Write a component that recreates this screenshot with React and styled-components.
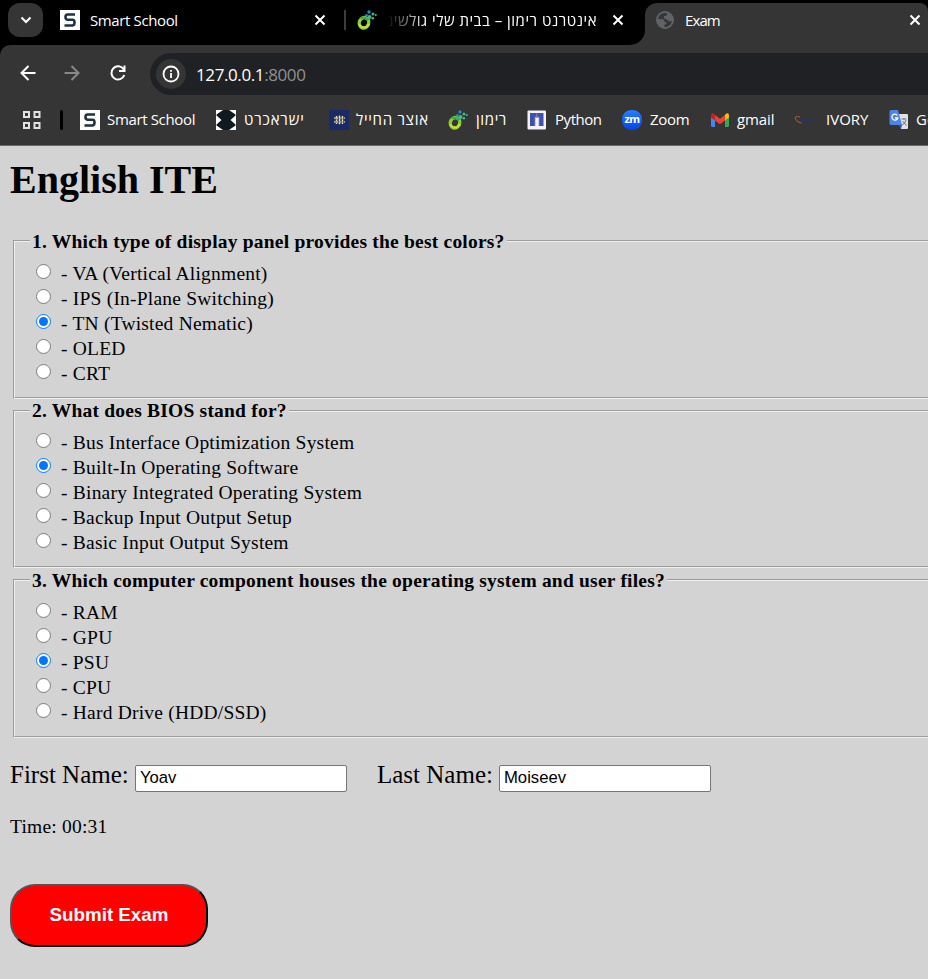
import React from 'react';
import styled, { createGlobalStyle } from 'styled-components';

const GlobalStyle = createGlobalStyle`
  * { box-sizing: border-box; }
  body { margin: 0; background: #d3d3d3; overflow: hidden; }
`;

const Window = styled.div`
  width: 928px;
  height: 979px;
  overflow: hidden;
  display: flex;
  flex-direction: column;
  background: #d3d3d3;
  color: #000;
`;

const Chrome = styled.header`
  flex: none;
  background: #000;
  color: #fff;
  font-family: 'Open Sans', 'Noto Sans', 'DejaVu Sans', sans-serif;
  font-size: 15px;
`;

const TabStrip = styled.div`
  display: flex;
  height: 45px;
`;

const InactiveCorner = styled.div`
  width: 645px;
  height: 45px;
  flex: none;
  background: #353535;
`;

const InactiveTabs = styled.div`
  height: 45px;
  display: flex;
  align-items: center;
  padding: 0 0 5px 8px;
  background: #000;
  border-radius: 0 0 15px 0;
`;

const TabSearch = styled.div`
  width: 35px;
  height: 34px;
  flex: none;
  display: flex;
  align-items: center;
  justify-content: center;
  background: #353535;
  border-radius: 12px;
`;

const Tab = styled.div`
  display: flex;
  align-items: center;
  width: ${(p) => p.$width}px;
  padding-left: ${(p) => p.$inset}px;
  flex: none;
`;

const TabTitle = styled.span`
  width: ${(p) => p.$width}px;
  margin-left: ${(p) => p.$gap}px;
  margin-right: ${(p) => p.$after || 0}px;
  line-height: 22px;
  white-space: nowrap;
  letter-spacing: ${(p) => p.$track || 0}px;
  overflow: hidden;
  direction: ${(p) => (p.$rtl ? 'rtl' : 'ltr')};
  ${(p) => p.$rtl && 'mask-image: linear-gradient(to right, transparent, #000 38px);'}
`;

const TabDivider = styled.i`
  width: 2px;
  height: 20px;
  flex: none;
  background: #3c3c3c;
`;

const ActiveTab = styled.div`
  flex: 1;
  display: flex;
  align-items: center;
  margin-top: 3px;
  padding: 0 0 8px 11px;
  background: #353535;
  border-radius: 12px 8px 0 0;
`;

const Toolbar = styled.div`
  height: 50px;
  display: flex;
  align-items: center;
  padding: 8px 0 0 18px;
  background: #353535;
  border-top-left-radius: 10px;
`;

const NavButton = styled.span`
  width: 20px;
  height: 20px;
  flex: none;
  display: flex;
  align-items: center;
  justify-content: center;
  margin: 0 ${(p) => p.$after}px 2px 0;
`;

const AddressBar = styled.div`
  flex: 1;
  height: 42px;
  display: flex;
  align-items: center;
  padding-left: 6px;
  background: #202124;
  border-radius: 21px 0 0 21px;
  font-size: 17px;
  letter-spacing: -0.4px;
`;

const SiteInfo = styled.span`
  width: 30px;
  height: 30px;
  display: flex;
  align-items: center;
  justify-content: center;
  margin-right: 10px;
  border-radius: 50%;
  background: #353535;
`;

const Port = styled.span`
  color: #8f9193;
`;

const Bookmarks = styled.nav`
  height: 51px;
  display: flex;
  align-items: center;
  padding: 0 0 1px 22px;
  background: #353535;
  border-bottom: 1px solid #6b6768;
`;

const BookmarkDivider = styled.i`
  width: 3px;
  height: 20px;
  flex: none;
  margin: 0 17px 0 19px;
  border-radius: 2px;
  background: #000;
`;

const Bookmark = styled.span`
  width: ${(p) => p.$width}px;
  flex: none;
  display: flex;
  align-items: center;
  white-space: nowrap;
  line-height: 22px;
`;

const BookmarkLabel = styled.span`
  margin-left: ${(p) => p.$gap}px;
  padding-bottom: 2px;
  line-height: 20px;
  letter-spacing: ${(p) => p.$track}px;
`;

const Page = styled.main`
  flex: 1;
  font-family: 'Liberation Serif', 'Times New Roman', serif;
  font-size: 20px;
`;

const Title = styled.h1`
  margin: 10px 0 0 10px;
  height: 73px;
  font-size: 40px;
  line-height: 48px;
`;

const Question = styled.fieldset`
  width: 1000px;
  height: ${(p) => p.$height}px;
  margin: 0 0 0 13px;
  padding: 0 0 0 15px;
  border: 2px groove #f0f0f0;
`;

const Prompt = styled.legend`
  padding: 0 2px;
  height: 23px;
  font-size: 19.5px;
  letter-spacing: 0.21px;
  font-weight: bold;
  line-height: ${(p) => p.$line}px;
  white-space: nowrap;
`;

const Options = styled.div`
  padding-top: ${(p) => p.$top}px;
`;

const Option = styled.label`
  display: flex;
  height: 25px;
  line-height: 27px;
  padding-left: 6px;
  font-size: 19.5px;
  letter-spacing: 0.21px;
`;

const Radio = styled.input`
  width: 15px;
  height: 15px;
  flex: none;
  margin: 4px 10px 0 0;
`;

const Names = styled.div`
  display: flex;
  align-items: flex-start;
  height: 77px;
  padding: 26px 0 0 10px;
`;

const NameLabel = styled.label`
  width: ${(p) => p.$width}px;
  font-size: 25px;
  line-height: 22px;
  white-space: nowrap;
`;

const NameInput = styled.input`
  width: 212px;
  height: 27px;
  margin: 1px 30px 0 0;
  padding: 0 4px 2px;
  border: 1px solid #767676;
  border-radius: 2px;
  background: #fff;
  color: #000;
  font: 16.67px 'Liberation Sans', Arial, sans-serif;
`;

const Timer = styled.p`
  margin: 0 0 0 10px;
  height: 69px;
  font-size: 19.5px;
  letter-spacing: 0.21px;
  line-height: 24px;
`;

const Submit = styled.button`
  display: block;
  width: 198px;
  height: 63px;
  margin-left: 10px;
  padding: 0 0 2px;
  border: 2px outset #000;
  border-radius: 25px;
  background: #f00;
  color: #fff;
  font: bold 18.75px 'Liberation Sans', Arial, sans-serif;
`;

const Glyph = styled.svg`
  display: block;
  flex: none;
  fill: none;
  overflow: visible;
`;

const CloseIcon = () => (
  <Glyph width="12" height="12" viewBox="0 0 12 12" stroke="#fff" strokeWidth="2">
    <path d="M1.5 1.5l9 9M10.5 1.5l-9 9" />
  </Glyph>
);

const SchoolIcon = () => (
  <Glyph width="20" height="20" viewBox="0 0 20 20">
    <path fill="#fff" d="M0 0h20v20H0z" />
    <path d="M15 4.5H7.5Q5.5 4.5 5.5 7T7.5 9.7h5Q14.5 9.7 14.5 12.4T12.5 15.5H4.5" stroke="#20323f" strokeWidth="2.6" />
  </Glyph>
);

const RimonIcon = () => (
  <Glyph width="20" height="20" viewBox="0 0 20 20">
    <ellipse cx="7" cy="12.800" rx="4.700" ry="5.300" transform="rotate(20 7 12.8)" stroke="#8ccf2f" strokeWidth="3.4" />
    <path d="M2.3 14A5 5 0 0 0 11.800 14" stroke="#c0dc35" strokeWidth="2.200" />
    <path d="M3.500 8.500q4-2.500 8 1.500" stroke="#35a95b" strokeWidth="2.2" />
    <g fill="#39bd8c">
      <circle cx="12.500" cy="7" r="2" /><circle cx="16" cy="4" r="1.500" />
      <circle cx="15.800" cy="8.300" r="1.300" /><circle cx="18.8" cy="5" r="1" />
    </g>
    <g fill="#258ec0"><circle cx="12" cy="2" r="1.7" /><circle cx="9.500" cy="5.2" r="1.300" /></g>
  </Glyph>
);

const GlobeIcon = () => (
  <Glyph width="18" height="18" viewBox="0 0 18 18">
    <circle cx="9" cy="9" r="9" fill="#5f6368" />
    <path fill="#353535" d="M9 2Q3 2 2 8l5 .2Q8.8 9 8.5 11l2 .2V13l-2 .8L8.3 16Q14.5 16 16 10q-2 1-4-.2-1-2-3-1.800Q7 7 8 5l3-.5V2.300z" />
  </Glyph>
);

const GridIcon = () => (
  <Glyph width="19" height="18" viewBox="0 0 19 18" stroke="#e3e3e3" strokeWidth="2">
    <path d="M2 1h5v5H2zM12.500 1h5v5h-5zM2 12h5v5H2zM12.500 12h5v5h-5z" />
  </Glyph>
);

const IsracardIcon = () => (
  <Glyph width="20" height="20" viewBox="0 0 20 20">
    <path fill="#fff" d="M0 0h20v20H0z" />
    <path fill="#101820" d="M7 0h6l6.500 4.500v1L14.500 10l5 4.500v1L13 20H7L.5 15.500v-1l5-4.500-5-4.500v-1z" />
  </Glyph>
);

const OtzarIcon = () => (
  <Glyph width="20" height="20" viewBox="0 0 20 20">
    <path fill="#1b2a66" d="M0 0h20v20H0z" />
    <path stroke="#eadf9a" strokeWidth="1.500" d="M7.500 6v8M10.500 5.500v9M13.500 6v8" strokeDasharray="2.400 .8" />
    <path stroke="#eadf9a" strokeWidth="1.200" d="M5 8.200h11M5 11.800h11" strokeDasharray="1.700 .8" />
  </Glyph>
);

const PythonIcon = () => (
  <Glyph width="20" height="20" viewBox="0 0 20 20">
    <rect x=".5" y=".5" width="18.500" height="19" rx="1" fill="#f3f3f8" />
    <path fill="#3f51a8" d="M3 3h13.500v13H12V7.500H8V16H3z" />
    <path stroke="#8a94cd" strokeWidth=".8" d="M8 16V7h4v9M9.800 3v4" />
  </Glyph>
);

const ZoomText = styled.span`
  width: 20px;
  height: 20px;
  flex: none;
  border-radius: 9px;
  background: linear-gradient(#2a7cff, #0644e8);
  font: bold 11px/18px 'Open Sans', sans-serif;
  letter-spacing: -0.5px;
  text-align: center;
`;

const GmailIcon = () => (
  <Glyph width="20" height="20" viewBox="0 0 20 20">
    <path fill="#4285f4" d="M1 7l4 3v7H2.500Q1 17 1 15.500z" />
    <path fill="#34a853" d="M19 7l-4 3v7h2.500q1.500 0 1.500-1.500z" />
    <path fill="#ea4335" d="M5 5l5 3.800L15 5v5.500l-5 3.700-5-3.700z" />
    <path fill="#c5221f" d="M1 5.500q0-2.700 2.500-2L5 4.700v5.800L1 7.500z" />
    <path fill="#fbbc04" d="M19 5.500q0-2.700-2.500-2L15 4.700v5.800l4-3z" />
  </Glyph>
);

const IvoryIcon = () => (
  <Glyph width="20" height="20" viewBox="0 0 20 20">
    <path d="M6 7Q0 5.500 1.500 9q1.500 3.500 6 4" stroke="#a7672d" strokeWidth="1" />
    <path d="M3 8q5 4.500 16 1M8 11.500l8-1" stroke="#29336f" strokeWidth="1.500" />
  </Glyph>
);

const TranslateIcon = () => (
  <Glyph width="20" height="20" viewBox="0 0 20 20">
    <path fill="#dfe1e5" d="M8 4h10q1 0 1 1v13q0 1-1 1h-6z" />
    <path fill="#4c85e8" d="M1 0h8l4 15H2q-1.500 0-1.500-1.500V1.500Q.5 0 2 0z" />
    <path d="M8.300 5.300A3 3 0 1 0 8.800 8H6" stroke="#fff" strokeWidth="1.300" />
    <path d="M12.500 9h5M15 8v1.500M17 10q-1 4-4 5M13.500 11l4 4.500" stroke="#6d7781" />
    <path fill="#3156aa" d="M9.500 15H13l-1 4z" />
  </Glyph>
);

const bookmarks = [
  { icon: <SchoolIcon />, text: 'Smart School', width: 136, gap: 7, track: -0.35 },
  { icon: <IsracardIcon />, text: 'ישראכרט', width: 113, gap: 8, track: 0.85 },
  { icon: <OtzarIcon />, text: 'אוצר החייל', width: 119, gap: 7, track: 0.7 },
  { icon: <RimonIcon />, text: 'רימון', width: 79, gap: 8, track: 0.6 },
  { icon: <PythonIcon />, text: 'Python', width: 95, gap: 8, track: -0.45 },
  { icon: <ZoomText>zm</ZoomText>, text: 'Zoom', width: 88, gap: 8, track: -0.3 },
  { icon: <GmailIcon />, text: 'gmail', width: 84, gap: 7, track: -0.1 },
  { icon: <IvoryIcon />, text: 'IVORY', width: 95, gap: 12, track: 0 },
  { icon: <TranslateIcon />, text: 'Google', width: 80, gap: 7, track: 0 },
];

const questions = [
  {
    prompt: '1. Which type of display panel provides the best colors?',
    height: 170,
    line: 25,
    top: 8,
    selected: 2,
    options: ['VA (Vertical Alignment)', 'IPS (In-Plane Switching)', 'TN (Twisted Nematic)', 'OLED', 'CRT'],
  },
  {
    prompt: '2. What does BIOS stand for?',
    height: 169,
    line: 23,
    top: 7,
    selected: 1,
    options: ['Bus Interface Optimization System', 'Built-In Operating Software', 'Binary Integrated Operating System', 'Backup Input Output Setup', 'Basic Input Output System'],
  },
  {
    prompt: '3. Which computer component houses the operating system and user files?',
    height: 170,
    line: 25,
    top: 8,
    selected: 2,
    options: ['RAM', 'GPU', 'PSU', 'CPU', 'Hard Drive (HDD/SSD)'],
  },
];

export default function App() {
  return (
    <Window>
      <GlobalStyle />
      <Chrome>
        <TabStrip>
          <InactiveCorner>
            <InactiveTabs>
              <TabSearch>
                <Glyph width="12" height="8" viewBox="0 0 12 8" stroke="#fff" strokeWidth="2">
                  <path d="M1.500 1.500L6 6l4.500-4.500" />
                </Glyph>
              </TabSearch>
              <Tab $width={301} $inset={17}>
                <SchoolIcon />
                <TabTitle $width={224} $gap={10} $track={-0.38}>Smart School</TabTitle>
                <CloseIcon />
              </Tab>
              <TabDivider />
              <Tab $width={290} $inset={11}>
                <RimonIcon />
                <TabTitle $rtl $width={210} $gap={10} $after={15} $track={0.5}>אינטרנט רימון – בבית שלי גולשים</TabTitle>
                <CloseIcon />
              </Tab>
            </InactiveTabs>
          </InactiveCorner>
          <ActiveTab>
            <GlobeIcon />
            <TabTitle $width={224} $gap={11} $track={-0.9}>Exam</TabTitle>
            <CloseIcon />
          </ActiveTab>
        </TabStrip>
        <Toolbar>
          <NavButton $after={24}>
            <Glyph width="16" height="16" viewBox="0 0 16 16" stroke="#fff" strokeWidth="2">
              <path d="M15.500 8H2M8.500 1L1.500 8l7 7" />
            </Glyph>
          </NavButton>
          <NavButton $after={26}>
            <Glyph width="16" height="16" viewBox="0 0 16 16" stroke="#888" strokeWidth="2">
              <path d="M.5 8H14M7.500 1l7 7-7 7" />
            </Glyph>
          </NavButton>
          <NavButton $after={22}>
            <Glyph width="16" height="16" viewBox="0 0 16 16" stroke="#fff" strokeWidth="2">
              <path d="M13.700 4.500A6.600 6.600 0 1 0 14.300 10M14.500 .5v5.500H9" />
            </Glyph>
          </NavButton>
          <AddressBar>
            <SiteInfo>
              <Glyph width="18" height="18" viewBox="0 0 18 18" stroke="#fff" strokeWidth="1.800">
                <circle cx="9" cy="9" r="7.500" /><path d="M9 8v5M9 5v1.800" />
              </Glyph>
            </SiteInfo>
            <span>127.0.0.1<Port>:8000</Port></span>
          </AddressBar>
        </Toolbar>
        <Bookmarks>
          <GridIcon />
          <BookmarkDivider />
          {bookmarks.map((b) => (
            <Bookmark key={b.text} $width={b.width}>
              {b.icon}
              <BookmarkLabel $gap={b.gap} $track={b.track}>{b.text}</BookmarkLabel>
            </Bookmark>
          ))}
        </Bookmarks>
      </Chrome>
      <Page>
        <Title>English ITE</Title>
        {questions.map((q, qi) => (
          <Question key={q.prompt} $height={q.height}>
            <Prompt $line={q.line}>{q.prompt}</Prompt>
            <Options $top={q.top}>
              {q.options.map((option, i) => (
                <Option key={option}>
                  <Radio type="radio" name={`question-${qi}`} defaultChecked={i === q.selected} />
                  - {option}
                </Option>
              ))}
            </Options>
          </Question>
        ))}
        <Names>
          <NameLabel htmlFor="first" $width={125}>First Name:</NameLabel>
          <NameInput id="first" defaultValue="Yoav" />
          <NameLabel htmlFor="last" $width={122}>Last Name:</NameLabel>
          <NameInput id="last" defaultValue="Moiseev" />
        </Names>
        <Timer>Time: 00:31</Timer>
        <Submit>Submit Exam</Submit>
      </Page>
    </Window>
  );
}
